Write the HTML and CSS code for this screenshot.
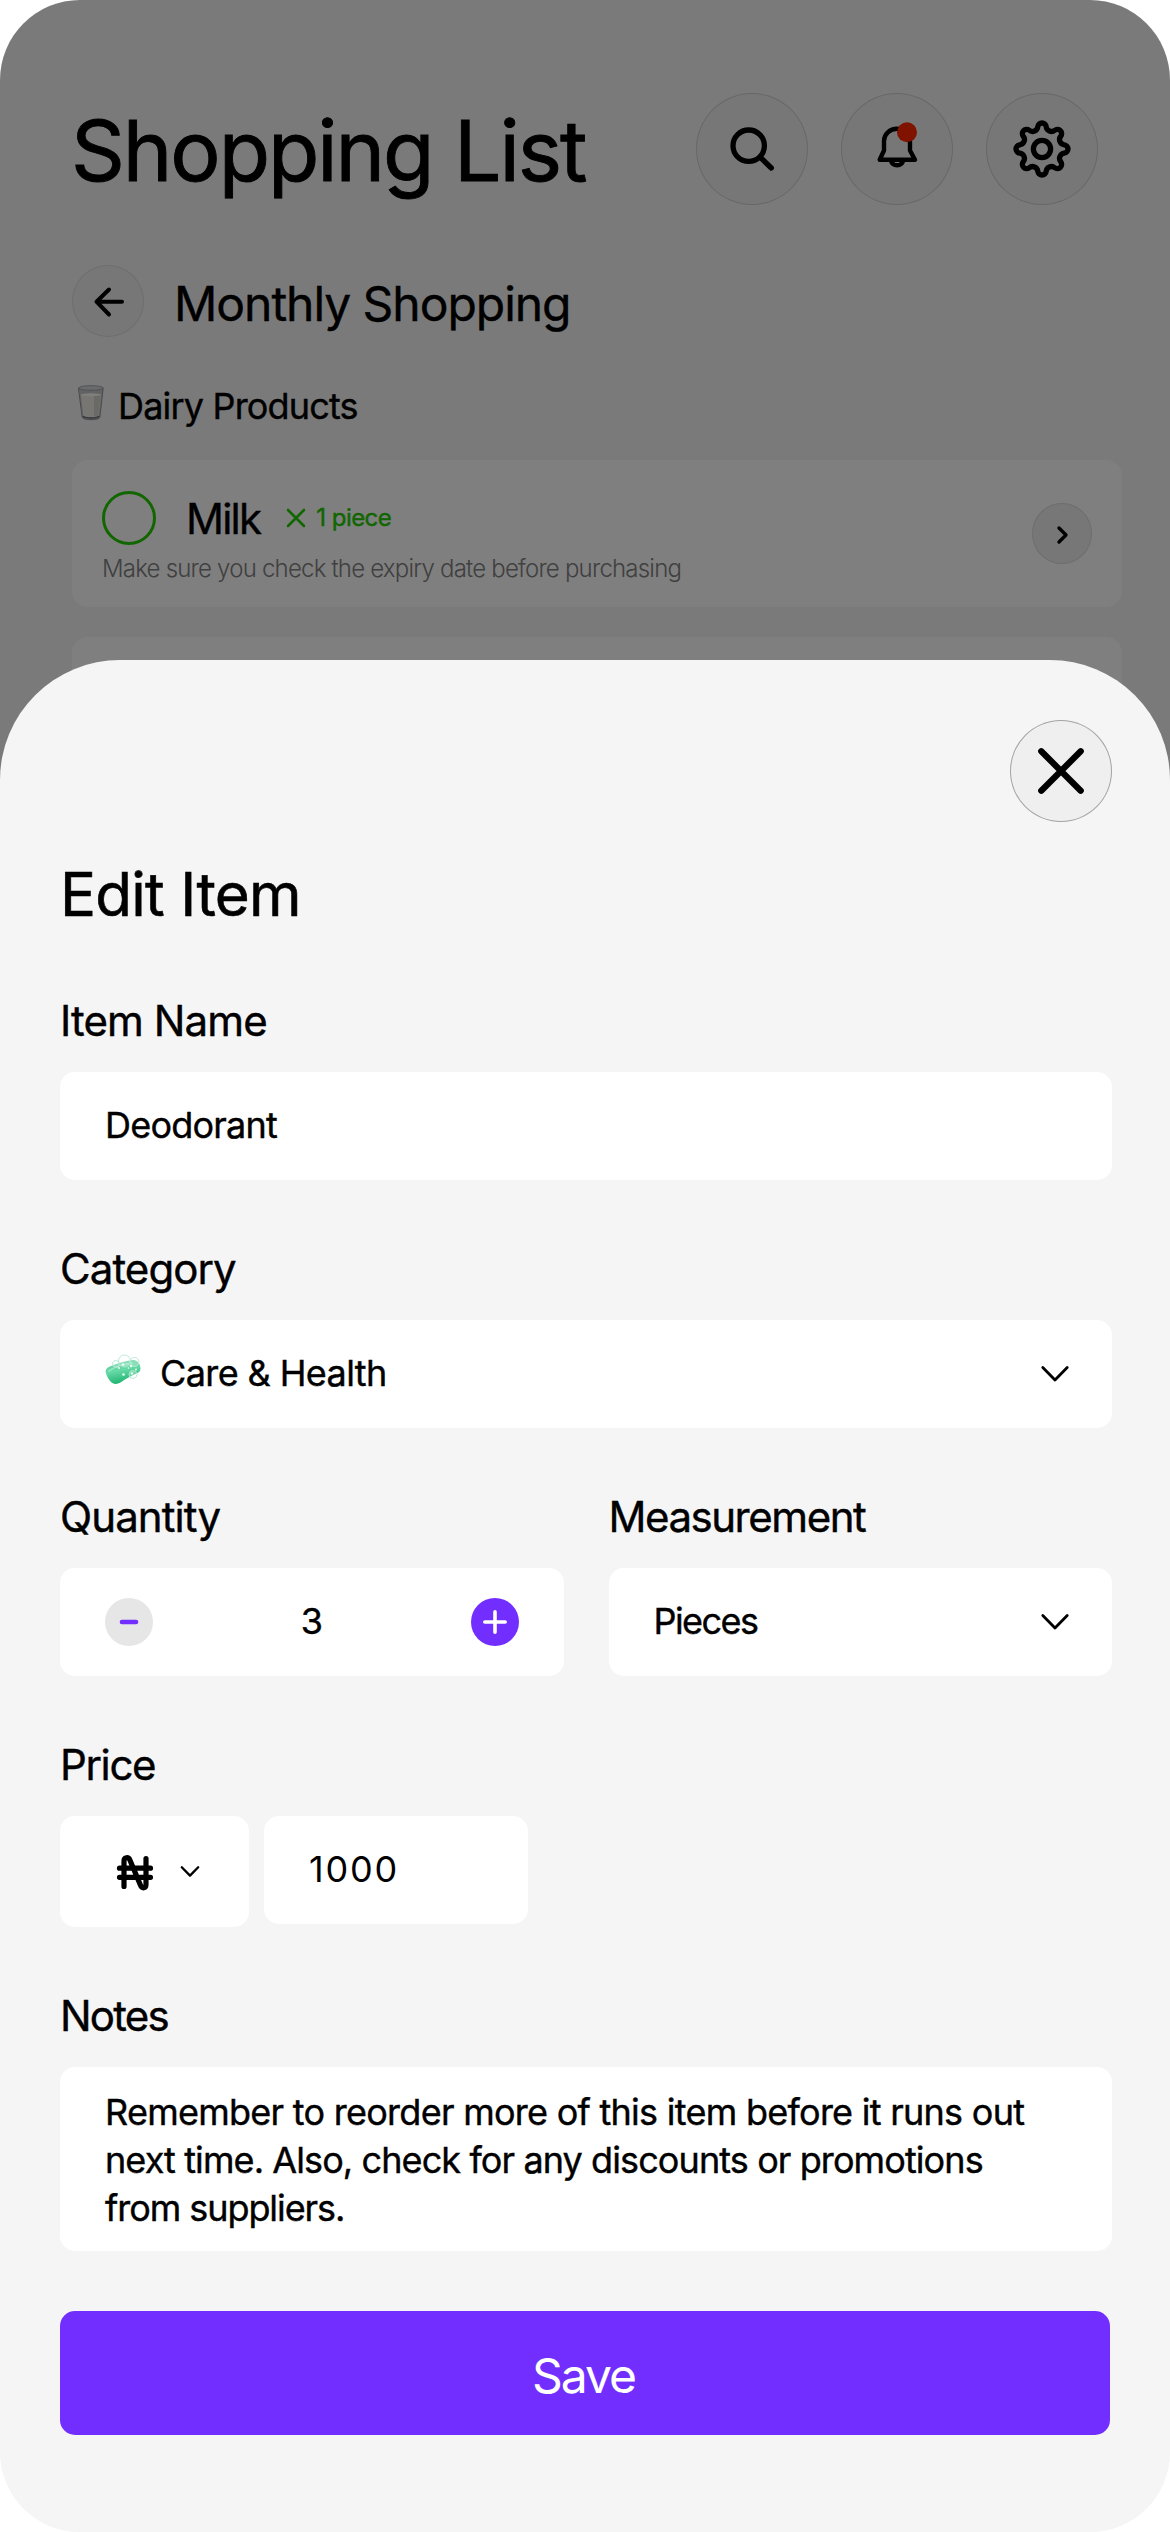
FILE: index.html
```html
<!DOCTYPE html>
<html lang="en">
<head>
<meta charset="utf-8">
<title>Shopping List</title>
<link rel="stylesheet" href="styles.css">
</head>
<body>
<div class="phone">
  <main class="page">
    <header class="topbar">
      <h1 class="title">Shopping List</h1>
      <nav class="actions">
        <button class="round-btn" aria-label="Search">
          <svg viewBox="0 0 112 112" class="icon"><circle cx="52.7" cy="52.7" r="15.7"/><path d="M64.5 64.5 75.3 75"/></svg>
        </button>
        <button class="round-btn" aria-label="Notifications">
          <svg viewBox="0 0 112 112" class="icon bell"><path d="M43 48a13 12.2 0 0 1 26 0v9.500l5 9.200H38.700L43 57.500z"/><path d="M49.800 67.500a6.500 6.500 0 0 0 12.500 0"/><circle class="dot" cx="66" cy="39.300" r="10"/></svg>
        </button>
        <button class="round-btn" aria-label="Settings">
          <svg viewBox="-56 -56 112 112" class="icon"><circle r="8.600"/><path d="M-4.220-22.260A4.250 4.250 0 0 1 4.220-22.260A5.250 5.250 0 0 0 12.756-18.724A4.250 4.250 0 0 1 18.724-12.756A5.250 5.250 0 0 0 22.260-4.220A4.250 4.250 0 0 1 22.260 4.220A5.250 5.250 0 0 0 18.724 12.756A4.250 4.250 0 0 1 12.756 18.724A5.250 5.250 0 0 0 4.220 22.260A4.250 4.250 0 0 1-4.220 22.260A5.250 5.250 0 0 0-12.756 18.724A4.250 4.250 0 0 1-18.724 12.756A5.250 5.250 0 0 0-22.260 4.220A4.250 4.250 0 0 1-22.260-4.220A5.250 5.250 0 0 0-18.724-12.756A4.250 4.250 0 0 1-12.756-18.724A5.250 5.250 0 0 0-4.220-22.260z"/></svg>
        </button>
      </nav>
    </header>
    <div class="subbar">
      <button class="back-btn" aria-label="Back">
        <svg viewBox="0 0 72 72" class="back-icon"><path d="M50 36.700H24.500M37 24.500 24.500 36.700 37 49.500"/></svg>
      </button>
      <h2 class="list-name">Monthly Shopping</h2>
    </div>
    <div class="group">
      <svg viewBox="0 0 26 36" class="glass"><path d="M.8 3h24.400l-3.400 29.500c-.3 3-17.300 3-17.600 0z" fill="#c4c5ca" stroke="#94969c" stroke-width="1"/><path d="M2.800 9.500h20.400l-2.500 21.500c-.3 2-15.100 2-15.400 0z" fill="#f0ece4"/><path d="M16 10h6.500l-2.300 20.500-4.200 1z" fill="#d6d2ca"/><ellipse cx="13" cy="3" rx="12.200" ry="2.300" fill="#d6d7da" stroke="#a2a4aa" stroke-width="1"/><ellipse cx="13" cy="9.800" rx="10.300" ry="1.500" fill="#fffefa"/><path d="M5.300 31.500c3 2 12.400 2 15.400 0" fill="none" stroke="#666870" stroke-width="1.400"/></svg>
      <h3 class="group-name">Dairy Products</h3>
    </div>
    <div class="cards">
      <article class="card">
        <div class="card-body">
          <div class="card-head">
            <span class="check"></span>
            <span class="card-name">Milk</span>
            <svg viewBox="0 0 20 20" class="times"><path d="M2 2l16 16M18 2 2 18"/></svg>
            <span class="card-qty">1 piece</span>
          </div>
          <p class="card-note">Make sure you check the expiry date before purchasing</p>
        </div>
        <button class="go-btn" aria-label="Open">
          <svg viewBox="0 0 60 61" class="go-icon"><path d="M27 25l7 7-7 7"/></svg>
        </button>
      </article>
      <article class="card"></article>
    </div>
  </main>
  <div class="scrim"></div>
  <section class="sheet">
    <button class="close-btn" aria-label="Close">
      <svg viewBox="0 0 102 102" class="close-icon"><path d="M31.300 31.300l39.400 39.400M70.700 31.300 31.300 70.700"/></svg>
    </button>
    <h2 class="sheet-title">Edit Item</h2>
    <form class="form">
      <div class="field">
        <label class="label l-name">Item Name</label>
        <div class="box"><span class="value v-name">Deodorant</span></div>
      </div>
      <div class="field">
        <label class="label l-cat">Category</label>
        <div class="box">
          <svg viewBox="0 0 36 32" class="soap">
            <defs><linearGradient id="bar" x1="0" y1="0" x2=".3" y2="1"><stop offset="0" stop-color="#5cc795"/><stop offset=".5" stop-color="#66d9a6"/><stop offset="1" stop-color="#1fb572"/></linearGradient></defs>
            <path d="M.8 18.500C0 15.500 2 13.800 5 12.500 12 9.500 20 7 28 6c4-.3 7.500 4 7.500 8.500 0 3-2 4.300-5 5.500-6 2.500-10 5-15 8.500-3.500 2-7.500 2-10-1C3 24.500 1.500 21.500.8 18.500z" fill="url(#bar)"/>
            <path d="M4 17c7-5 15-7 23-8" fill="none" stroke="#93e6c2" stroke-width="1.600" stroke-linecap="round"/>
            <g fill="#fff" fill-opacity=".25" stroke="#b3e8d1" stroke-width=".9"><circle cx="19.500" cy="7" r="6"/><circle cx="29.500" cy="8" r="4.500"/><circle cx="11" cy="10" r="3.500"/><circle cx="28" cy="20.500" r="4"/></g>
            <g fill="#e6fff4"><circle cx="14" cy="14" r="1"/><circle cx="18" cy="10.500" r="1.300"/><circle cx="26" cy="12" r="1.300"/><circle cx="31" cy="15.500" r="1"/><circle cx="18.500" cy="20.500" r="1.300"/><circle cx="27" cy="19.500" r="1.200"/><circle cx="23.500" cy="14" r=".8"/></g>
          </svg>
          <span class="value v-cat">Care &amp; Health</span>
          <svg viewBox="0 0 48 48" class="chevron"><path d="M11.800 17.500 24 30l12.200-12.500"/></svg>
        </div>
      </div>
      <div class="pair">
        <div class="field">
          <label class="label l-qty">Quantity</label>
          <div class="box stepper">
            <svg viewBox="0 0 48 48" class="step"><circle cx="24" cy="24" r="24" fill="#e6e6e6"/><path d="M17 24h14" stroke="#722eff" stroke-width="4.600"/></svg>
            <span class="value">3</span>
            <svg viewBox="0 0 48 48" class="step"><circle cx="24" cy="24" r="24" fill="#722eff"/><path d="M13.800 24h20.400M24 13.800v20.400" stroke="#fff" stroke-width="3.600"/></svg>
          </div>
        </div>
        <div class="field">
          <label class="label l-mea">Measurement</label>
          <div class="box">
            <span class="value v-mea">Pieces</span>
            <svg viewBox="0 0 48 48" class="chevron"><path d="M11.800 17.500 24 30l12.200-12.500"/></svg>
          </div>
        </div>
      </div>
      <div class="field">
        <label class="label l-price">Price</label>
        <div class="price-row">
          <div class="box currency">
            <svg viewBox="0 0 36 36" class="naira"><path d="M7 31.500V6c0-4 4.500-4.500 6-.8L23.500 30.300c1.500 3.700 5.500 3.200 5.500-.8V3.500M2.500 13.200h31M2.500 22.300h31"/></svg>
            <svg viewBox="0 0 20 14" class="mini-chevron"><path d="M1.800 2.200 10 10.600l8.200-8.400"/></svg>
          </div>
          <div class="box amount"><span class="value v-price">1000</span></div>
        </div>
      </div>
      <div class="field">
        <label class="label l-notes">Notes</label>
        <div class="box notes">
          <span class="note-1">Remember to reorder more of this item before it runs out</span>
          <span class="note-2">next time. Also, check for any discounts or promotions</span>
          <span class="note-3">from suppliers.</span>
        </div>
      </div>
    </form>
    <button class="save">Save</button>
  </section>
</div>
</body>
</html>
```
FILE: styles.css
```css
* { box-sizing: border-box; margin: 0; padding: 0; }
body { background: #fff; font-family: Inter, "Liberation Sans", sans-serif; font-weight: 400; color: #000; -webkit-text-stroke: .4px currentColor; }
h1, h2, h3 { font-weight: 400; }
button { border: 0; background: none; font: inherit; }
svg { display: block; flex: none; overflow: visible; }
path { stroke-linecap: round; stroke-linejoin: round; }

.phone { position: relative; width: 1170px; height: 2532px; border-radius: 80px; overflow: hidden; background: #f5f5f5; }
.page { height: 760px; overflow: hidden; padding: 93px 48px 0 72px; }

.topbar { display: flex; justify-content: space-between; height: 112px; padding-right: 24px; }
.title { font-size: 84px; line-height: 116px; letter-spacing: -2.1px; white-space: nowrap; margin-left: -1px; -webkit-text-stroke-width: .9px; }
.actions { display: flex; gap: 33px; }
.round-btn { width: 112px; height: 112px; border-radius: 50%; background: #efefef; box-shadow: inset 0 0 0 1px #cfcfcf; }
.icon { width: 112px; height: 112px; fill: none; stroke: #000; stroke-width: 5.300; }
.bell { stroke-width: 4.400; }
.dot { fill: #ff2600; stroke: none; }

.subbar { display: flex; align-items: center; gap: 30px; height: 72px; margin-top: 60px; }
.back-btn { width: 72px; height: 72px; border-radius: 50%; background: #efefef; box-shadow: inset 0 0 0 1px #dcdcdc; }
.back-icon { width: 72px; height: 72px; fill: none; stroke: #000; stroke-width: 4; }
.list-name { font-size: 48px; line-height: 60px; letter-spacing: -1.04px; padding-top: 5px; }

.group { display: flex; align-items: center; gap: 14px; height: 44px; margin: 47px 0 32px 6px; }
.glass { width: 26px; height: 36px; margin-top: -7px; }
.group-name { font-size: 36px; line-height: 44px; letter-spacing: -.82px; }

.cards { display: flex; flex-direction: column; gap: 30px; }
.card { display: flex; justify-content: space-between; height: 147px; padding: 31px 30px 0; border-radius: 16px; background: #fff; }
.card-head { display: flex; align-items: center; height: 54px; }
.check { width: 54px; height: 54px; border: 3px solid #22cc00; border-radius: 50%; }
.card-name { margin-left: 30px; padding-top: 2px; font-size: 42px; line-height: 50px; letter-spacing: -1.76px; }
.times { width: 20px; height: 20px; margin-left: 26px; fill: none; stroke: #22cc00; stroke-width: 2.600; }
.card-qty { margin-left: 10px; font-size: 24px; line-height: 30px; letter-spacing: -.54px; color: #22cc00; }
.card-note { margin-top: 9px; font-size: 24px; font-weight: 300; line-height: 30px; letter-spacing: -.79px; color: #808080; white-space: nowrap; -webkit-text-stroke-width: 0; }
.go-btn { width: 60px; height: 61px; margin-top: 12px; border-radius: 50%; background: #efefef; box-shadow: inset 0 0 0 1px #dcdcdc; }
.go-icon { width: 60px; height: 61px; fill: none; stroke: #000; stroke-width: 3.400; }

.scrim { position: absolute; inset: 0 0 auto; height: 1000px; background: rgba(0, 0, 0, .5); }

.sheet { position: absolute; left: 0; right: 0; bottom: 0; height: 1872px; display: flex; flex-direction: column; padding: 60px 58px 0 60px; border-radius: 120px 120px 80px 80px; background: #f5f5f5; }
.close-btn { align-self: flex-end; width: 102px; height: 102px; border-radius: 50%; background: #efefef; box-shadow: inset 0 0 0 1px #a3a3a3; }
.close-icon { width: 102px; height: 102px; fill: none; stroke: #000; stroke-width: 6.300; }
.sheet-title { margin-top: 36px; font-size: 60px; line-height: 73px; letter-spacing: -.74px; -webkit-text-stroke-width: .6px; }

.form { display: flex; flex-direction: column; gap: 64px; margin-top: 65px; }
.field { display: flex; flex-direction: column; gap: 26px; }
.label { font-size: 42px; line-height: 50px; }
.l-name { letter-spacing: -.9px; }
.l-cat { letter-spacing: -.92px; }
.l-qty { letter-spacing: -.9px; }
.l-mea { letter-spacing: -1.46px; }
.l-price { letter-spacing: -1.36px; }
.l-notes { letter-spacing: -1.78px; }
.box { display: flex; align-items: center; height: 108px; padding: 0 33px 0 45px; border-radius: 15px; background: #fff; }
.value { font-size: 36px; line-height: 46px; padding-bottom: 2px; }
.v-name { letter-spacing: -.77px; }
.v-cat { margin-left: 19px; letter-spacing: -.6px; }
.v-mea { letter-spacing: -1.55px; }
.v-price { letter-spacing: 1.8px; -webkit-text-stroke-width: 0; }
.soap { width: 36px; height: 32px; margin-top: -8px; }
.chevron { width: 48px; height: 48px; margin-left: auto; fill: none; stroke: #000; stroke-width: 2.800; }
.pair { display: grid; grid-template-columns: 1fr 1fr; gap: 45px; }
.stepper { justify-content: space-between; padding: 0 45px; }
.step { width: 48px; height: 48px; }
.price-row { display: flex; align-items: flex-start; gap: 15px; }
.currency { width: 189px; height: 111px; gap: 27px; padding: 0 0 0 57px; }
.naira { width: 36px; height: 36px; margin-top: 3px; fill: none; stroke: #000; stroke-width: 5.200; }
.mini-chevron { width: 20px; height: 14px; fill: none; stroke: #000; stroke-width: 2.300; }
.amount { width: 264px; }
.notes { flex-direction: column; align-items: flex-start; height: 184px; padding: 21px 0 19px 45px; font-size: 36px; line-height: 48px; white-space: nowrap; }
.note-1 { letter-spacing: -.73px; }
.note-2 { letter-spacing: -.9px; }
.note-3 { letter-spacing: -1.06px; }
.save { width: 1050px; height: 124px; margin-top: 60px; padding-top: 5px; padding-right: 3px; border-radius: 15px; background: #722eff; color: #fff; font-size: 48px; letter-spacing: -2px; -webkit-text-stroke-width: 0; }
```
